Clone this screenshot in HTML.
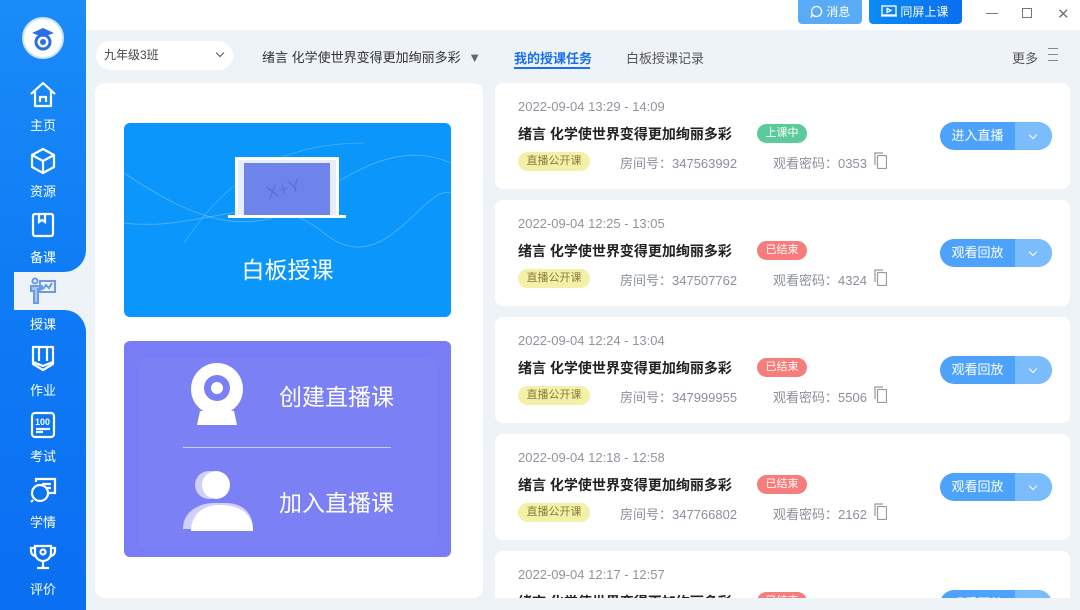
<!DOCTYPE html>
<html><head><meta charset="utf-8"><style>
*{margin:0;padding:0;box-sizing:border-box}
body{width:1080px;height:610px;overflow:hidden;background:#eef3f8;font-family:"Liberation Sans","Noto Sans CJK SC",sans-serif;position:relative}
.abs{position:absolute}
.top{left:0;top:0;width:1080px;height:30px;background:#fff}
.sbA{left:0;top:0;width:86px;height:272px;background:linear-gradient(180deg,#1a8cf8,#0f7cf5);border-bottom-right-radius:22px}
.sbL{left:0;top:260px;width:14px;height:60px;background:#0f7cf5}
.sbB{left:0;top:310px;width:86px;height:300px;background:linear-gradient(180deg,#0f7af5,#0a6ff2);border-top-right-radius:22px}
.pill{left:14px;top:272px;width:72px;height:38px;background:#eef3f8;border-radius:19px 0 0 19px}
.lbl{width:86px;text-align:center;color:#fff;font-size:13px;left:0}
.logo{left:22px;top:17px;width:42px;height:42px;border-radius:50%;background:#fff;border:2px solid #cfe3ff}
.panel{left:95px;top:83px;width:388px;height:515px;background:#fff;border-radius:10px}
.card{left:495px;width:575px;height:106px;background:#fff;border-radius:8px}
.date{left:23px;top:16px;font-size:13px;color:#90949c}
.title{left:23px;top:41px;font-size:14px;font-weight:600;color:#222}
.tag{left:262px;top:41px;width:50px;height:19px;border-radius:10px;color:#fff;font-size:11px;text-align:center;line-height:19px}
.yt{left:23px;top:69px;width:72px;height:19px;border-radius:10px;background:#f3f0a8;color:#8a7c3a;font-size:11px;text-align:center;line-height:19px}
.info{top:70px;font-size:13px;color:#8a8f99}
.btn{left:445px;top:39px;width:112px;height:28px;border-radius:14px;background:#4da3fb;overflow:hidden}
.btn span{position:absolute;left:0;width:75px;text-align:center;color:#fff;font-size:13px;line-height:28px}
.btn i{position:absolute;left:75px;top:0;width:37px;height:28px;background:#7bbcfd}
.btn i:after{content:"";position:absolute;left:15px;top:10px;width:5px;height:5px;border-right:1.3px solid #fff;border-bottom:1.3px solid #fff;transform:rotate(45deg)}
</style></head><body>
<div class="abs top"></div>
<div class="abs sbL"></div>
<div class="abs sbA"></div>
<div class="abs sbB"></div>
<div class="abs pill"></div>
<div class="abs logo"><svg width="38" height="38" viewBox="0 0 38 38"><path d="M8 14 L19 9 L30 14 L19 18Z" fill="#2b6ee6"/><circle cx="19" cy="23" r="7" fill="none" stroke="#2b6ee6" stroke-width="3"/><circle cx="19" cy="23" r="3" fill="#2b6ee6"/></svg></div>
<svg class="abs" style="left:28px;top:80px" width="30" height="30" viewBox="0 0 30 30" fill="none" stroke="#fff" stroke-width="2.2" stroke-linejoin="round"><path d="M3 14 L15 3 L27 14 M7 11 V26 H23 V11"/><path d="M12 22 V17 H18 V22"/></svg>
<svg class="abs" style="left:28px;top:146px" width="30" height="30" viewBox="0 0 30 30" fill="none" stroke="#fff" stroke-width="2.2" stroke-linejoin="round"><path d="M15 3 L26 9 V21 L15 27 L4 21 V9Z M4 9 L15 15 L26 9 M15 15 V27"/></svg>
<svg class="abs" style="left:30px;top:212px" width="26" height="26" viewBox="0 0 26 26" fill="none" stroke="#fff" stroke-width="2.2"><rect x="3" y="2" width="20" height="22" rx="2"/><path d="M9 2 V10 L12 8 L15 10 V2"/></svg>
<svg class="abs" style="left:28px;top:277px" width="30" height="28" viewBox="0 0 30 28" fill="none" stroke="#6b9be8" stroke-width="2"><circle cx="7" cy="4" r="2.5"/><path d="M3 9 H14 V12 H10 V26 H6 V14 H3Z" fill="#a9c6f3"/><rect x="12" y="4" width="15" height="11"/><path d="M15 12 L18 8 L21 11 L24 6"/></svg>
<svg class="abs" style="left:30px;top:344px" width="26" height="30" viewBox="0 0 26 30" fill="none" stroke="#fff" stroke-width="2.2" stroke-linejoin="round"><path d="M3 3 H23 V20 L13 26 L3 20Z M9 3 V17 M17 3 V17 M3 18 L13 22 L23 18"/></svg>
<svg class="abs" style="left:30px;top:411px" width="26" height="28" viewBox="0 0 26 28" fill="none" stroke="#fff" stroke-width="2.2"><rect x="2" y="2" width="22" height="24" rx="3"/><text x="5" y="14" font-size="9" fill="#fff" stroke="none" font-family="Liberation Sans" font-weight="bold">100</text><path d="M6 18 H20 M6 21 H13"/></svg>
<svg class="abs" style="left:28px;top:476px" width="30" height="28" viewBox="0 0 30 28" fill="none" stroke="#fff" stroke-width="2.2"><circle cx="12" cy="17" r="8"/><path d="M8 6 V3 H27 V17 H21 M14 8 H23 M18 12 H23 M5 24 L3 26"/></svg>
<svg class="abs" style="left:28px;top:543px" width="30" height="28" viewBox="0 0 30 28" fill="none" stroke="#fff" stroke-width="2.2"><path d="M7 3 H23 V10 A8 8 0 0 1 7 10Z M7 5 H3 V8 A5 5 0 0 0 8 13 M23 5 H27 V8 A5 5 0 0 1 22 13 M15 18 V24 M9 25 H21"/><circle cx="15" cy="9" r="2.5"/></svg>
<div class="abs lbl" style="top:115px">主页</div>
<div class="abs lbl" style="top:181px">资源</div>
<div class="abs lbl" style="top:247px">备课</div>
<div class="abs lbl" style="top:314px">授课</div>
<div class="abs lbl" style="top:380px">作业</div>
<div class="abs lbl" style="top:446px">考试</div>
<div class="abs lbl" style="top:512px">学情</div>
<div class="abs lbl" style="top:579px">评价</div>
<div class="abs" style="left:798px;top:0;width:64px;height:24px;background:#5aabf5;border-radius:0 0 4px 4px;color:#fff;font-size:12px;line-height:24px;padding-left:12px"><svg width="13" height="13" viewBox="0 0 13 13" style="vertical-align:-2px" fill="none" stroke="#fff" stroke-width="1.3"><path d="M6.5 1.5 A5 5 0 1 1 3 10 L1.5 11.5 L2 8.5 A5 5 0 0 1 6.5 1.5Z"/></svg> 消息</div>
<div class="abs" style="left:869px;top:0;width:93px;height:24px;background:linear-gradient(90deg,#0a8cf5,#0a6ef0);border-radius:0 0 4px 4px;color:#fff;font-size:12px;line-height:24px;padding-left:12px"><svg width="16" height="12" viewBox="0 0 16 12" style="vertical-align:-1px" fill="none" stroke="#fff" stroke-width="1.3"><rect x="1" y="1" width="14" height="9"/><path d="M6 3.5 L10 5.5 L6 7.5Z M0 11 H16"/></svg> 同屏上课</div>
<div class="abs" style="left:986px;top:13px;width:12px;height:1px;background:#777"></div>
<div class="abs" style="left:1022px;top:8px;width:10px;height:10px;border:1px solid #777"></div>
<div class="abs" style="left:1057px;top:5px;font-size:15px;color:#777">✕</div>
<div class="abs" style="left:96px;top:41px;width:137px;height:29px;background:#fff;border-radius:15px;font-size:12px;color:#444;line-height:29px;padding-left:8px">九年级3班<span style="position:absolute;left:121px;top:9px;width:6px;height:6px;border-right:1.4px solid #555;border-bottom:1.4px solid #555;transform:rotate(45deg)"></span></div>
<div class="abs" style="left:262px;top:47px;font-size:13px;color:#333">绪言 化学使世界变得更加绚丽多彩 <span style="color:#666;margin-left:4px">▼</span></div>
<div class="abs" style="left:514px;top:48px;font-size:13px;color:#1a6ff0;font-weight:bold">我的授课任务</div>
<div class="abs" style="left:514px;top:67px;width:76px;height:2px;background:#1a6ff0"></div>
<div class="abs" style="left:626px;top:48px;font-size:13px;color:#555">白板授课记录</div>
<div class="abs" style="left:1012px;top:48px;font-size:13px;color:#555">更多</div>
<div class="abs" style="left:1048px;top:48px;width:10px;height:13px;border-top:1px solid #888;border-bottom:1px solid #888"><div style="margin-top:5px;height:1px;background:#888"></div></div>
<div class="abs panel"></div>
<div class="abs" style="left:124px;top:123px;width:327px;height:194px;background:#0a96fa;border-radius:6px;overflow:hidden">
<svg class="abs" style="left:0;top:0" width="327" height="194"><path d="M0 50 C60 90 120 120 180 80 S280 20 327 40" stroke="rgba(255,255,255,.25)" fill="none"/><path d="M0 100 C80 110 140 60 200 110 S300 60 327 70" stroke="rgba(255,255,255,.25)" fill="none"/><path d="M60 120 C100 60 150 20 240 20" stroke="rgba(255,255,255,.2)" fill="none"/>
<rect x="111" y="34" width="104" height="60" fill="#fff"/><rect x="114" y="37" width="98" height="57" fill="#e8ecfb"/><rect x="120" y="40" width="86" height="54" fill="#6f84ea"/><rect x="104" y="92" width="118" height="3" fill="#fff"/><text x="142" y="72" font-size="18" fill="#5d72d8" font-family="Liberation Sans" transform="rotate(-15 160 65)">X+Y</text></svg>
<div class="abs" style="left:0;top:128px;width:327px;text-align:center;color:#fff;font-size:23px">白板授课</div></div>
<div class="abs" style="left:124px;top:341px;width:327px;height:216px;background:#787cf5;border-radius:6px;overflow:hidden">
<div class="abs" style="left:13px;top:17px;width:300px;height:190px;background:rgba(255,255,255,.035);border-radius:10px"></div>
<svg class="abs" style="left:66px;top:22px" width="54" height="66" viewBox="0 0 54 66"><circle cx="27" cy="26" r="26" fill="#fff"/><circle cx="27" cy="25" r="13" fill="#7b7ff5"/><circle cx="27" cy="25" r="6" fill="#fff"/><path d="M10 48 H44 L47 62 H7Z" fill="#fff"/></svg>
<div class="abs" style="left:155px;top:37px;color:#fff;font-size:23px">创建直播课</div>
<div class="abs" style="left:59px;top:106px;width:208px;height:1px;background:rgba(255,255,255,.6)"></div>
<svg class="abs" style="left:59px;top:128px" width="72" height="64"><circle cx="26" cy="16" r="14" fill="#cfd0fb"/><circle cx="33" cy="16" r="14" fill="#fff"/><path d="M0 60 C0 40 20 34 30 34 H42 C60 34 70 44 70 60Z" fill="#cfd0fb"/><path d="M8 62 C8 44 22 36 36 36 C56 36 70 44 70 62Z" fill="#fff"/></svg>
<div class="abs" style="left:155px;top:143px;color:#fff;font-size:23px">加入直播课</div></div>
<div class="abs card" style="top:83px"><div class="abs date">2022-09-04 13:29 - 14:09</div><div class="abs title">绪言 化学使世界变得更加绚丽多彩</div><div class="abs tag" style="background:#5ccb9a">上课中</div><div class="abs yt">直播公开课</div><div class="abs info" style="left:125px">房间号：347563992</div><div class="abs info" style="left:278px">观看密码：0353</div><svg class="abs" style="left:379px;top:69px" width="13" height="17" fill="none" stroke="#999" stroke-width="1.2"><rect x="3.5" y="3.5" width="9" height="13" rx="1"/><path d="M1 13 V1 H9"/></svg><div class="abs btn"><span>进入直播</span><i></i></div></div>
<div class="abs card" style="top:200px"><div class="abs date">2022-09-04 12:25 - 13:05</div><div class="abs title">绪言 化学使世界变得更加绚丽多彩</div><div class="abs tag" style="background:#f77c7c">已结束</div><div class="abs yt">直播公开课</div><div class="abs info" style="left:125px">房间号：347507762</div><div class="abs info" style="left:278px">观看密码：4324</div><svg class="abs" style="left:379px;top:69px" width="13" height="17" fill="none" stroke="#999" stroke-width="1.2"><rect x="3.5" y="3.5" width="9" height="13" rx="1"/><path d="M1 13 V1 H9"/></svg><div class="abs btn"><span>观看回放</span><i></i></div></div>
<div class="abs card" style="top:317px"><div class="abs date">2022-09-04 12:24 - 13:04</div><div class="abs title">绪言 化学使世界变得更加绚丽多彩</div><div class="abs tag" style="background:#f77c7c">已结束</div><div class="abs yt">直播公开课</div><div class="abs info" style="left:125px">房间号：347999955</div><div class="abs info" style="left:278px">观看密码：5506</div><svg class="abs" style="left:379px;top:69px" width="13" height="17" fill="none" stroke="#999" stroke-width="1.2"><rect x="3.5" y="3.5" width="9" height="13" rx="1"/><path d="M1 13 V1 H9"/></svg><div class="abs btn"><span>观看回放</span><i></i></div></div>
<div class="abs card" style="top:434px"><div class="abs date">2022-09-04 12:18 - 12:58</div><div class="abs title">绪言 化学使世界变得更加绚丽多彩</div><div class="abs tag" style="background:#f77c7c">已结束</div><div class="abs yt">直播公开课</div><div class="abs info" style="left:125px">房间号：347766802</div><div class="abs info" style="left:278px">观看密码：2162</div><svg class="abs" style="left:379px;top:69px" width="13" height="17" fill="none" stroke="#999" stroke-width="1.2"><rect x="3.5" y="3.5" width="9" height="13" rx="1"/><path d="M1 13 V1 H9"/></svg><div class="abs btn"><span>观看回放</span><i></i></div></div>
<div class="abs card" style="top:551px;height:47px;border-radius:8px 8px 0 0;overflow:hidden"><div class="abs date">2022-09-04 12:17 - 12:57</div><div class="abs title">绪言 化学使世界变得更加绚丽多彩</div><div class="abs tag" style="background:#f77c7c">已结束</div><div class="abs btn"><span>观看回放</span><i></i></div></div>
</body></html>
